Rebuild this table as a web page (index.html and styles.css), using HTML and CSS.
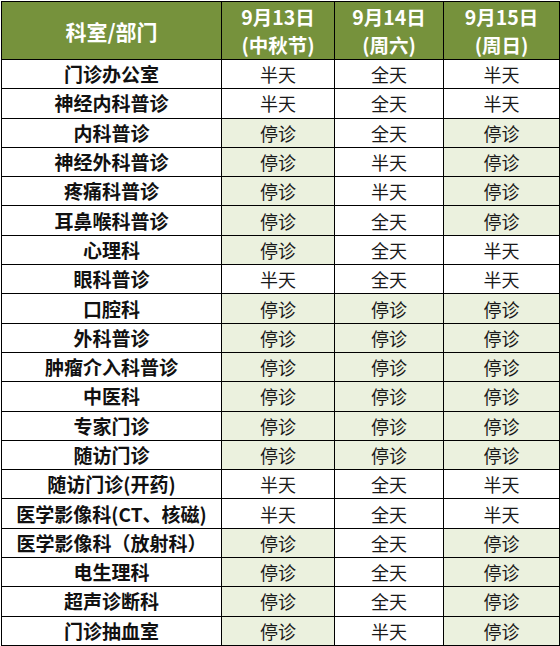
FILE: index.html
```html
<!DOCTYPE html>
<html lang="zh-CN">
<head>
<meta charset="utf-8">
<title>门诊安排</title>
<link rel="stylesheet" href="styles.css">
</head>
<body>
<div class="wrap">
<table class="sched">
<colgroup><col class="c1"><col class="c2"><col class="c3"><col class="c4"></colgroup>
<thead>
<tr class="head"><th class="lead">科室/部门</th><th>9月13日<br>(中秋节)</th><th>9月14日<br>(周六)</th><th>9月15日<br>(周日)</th></tr>
</thead>
<tbody>
<tr><td class="dept">门诊办公室</td><td>半天</td><td>全天</td><td>半天</td></tr>
<tr><td class="dept">神经内科普诊</td><td>半天</td><td>全天</td><td>半天</td></tr>
<tr><td class="dept">内科普诊</td><td class="off">停诊</td><td>全天</td><td class="off">停诊</td></tr>
<tr><td class="dept">神经外科普诊</td><td class="off">停诊</td><td>半天</td><td class="off">停诊</td></tr>
<tr><td class="dept">疼痛科普诊</td><td class="off">停诊</td><td>半天</td><td class="off">停诊</td></tr>
<tr><td class="dept">耳鼻喉科普诊</td><td class="off">停诊</td><td>全天</td><td class="off">停诊</td></tr>
<tr><td class="dept">心理科</td><td class="off">停诊</td><td>全天</td><td>半天</td></tr>
<tr><td class="dept">眼科普诊</td><td>半天</td><td>全天</td><td>半天</td></tr>
<tr><td class="dept">口腔科</td><td class="off">停诊</td><td class="off">停诊</td><td class="off">停诊</td></tr>
<tr><td class="dept">外科普诊</td><td class="off">停诊</td><td class="off">停诊</td><td class="off">停诊</td></tr>
<tr><td class="dept">肿瘤介入科普诊</td><td class="off">停诊</td><td class="off">停诊</td><td class="off">停诊</td></tr>
<tr><td class="dept">中医科</td><td class="off">停诊</td><td class="off">停诊</td><td class="off">停诊</td></tr>
<tr><td class="dept">专家门诊</td><td class="off">停诊</td><td class="off">停诊</td><td class="off">停诊</td></tr>
<tr><td class="dept">随访门诊</td><td class="off">停诊</td><td class="off">停诊</td><td class="off">停诊</td></tr>
<tr><td class="dept">随访门诊(开药)</td><td>半天</td><td>全天</td><td>半天</td></tr>
<tr><td class="dept">医学影像科(CT、核磁)</td><td>半天</td><td>全天</td><td>半天</td></tr>
<tr><td class="dept">医学影像科（放射科）</td><td class="off">停诊</td><td>全天</td><td class="off">停诊</td></tr>
<tr><td class="dept">电生理科</td><td class="off">停诊</td><td>全天</td><td class="off">停诊</td></tr>
<tr><td class="dept">超声诊断科</td><td class="off">停诊</td><td>全天</td><td class="off">停诊</td></tr>
<tr><td class="dept">门诊抽血室</td><td class="off">停诊</td><td>半天</td><td class="off">停诊</td></tr>
</tbody>
</table>
</div>
</body>
</html>
```
FILE: styles.css
```css
html, body {
  margin: 0;
  padding: 0;
  background: #ffffff;
}
.wrap {
  padding: 1px 0 0 1px;
}
.sched {
  border-collapse: collapse;
  table-layout: fixed;
  width: 558px;
  font-family: "Noto Sans CJK SC", "Noto Sans", sans-serif;
  color: #1a1a1a;
}
.c1 { width: 220px; }
.c2 { width: 113px; }
.c3 { width: 109px; }
.c4 { width: 116px; }
.sched th, .sched td {
  border: 1px solid #000;
  padding: 0;
  text-align: center;
  vertical-align: middle;
}
.head {
  height: 58px;
}
.head th {
  background: #76923c;
  color: #ffffff;
  font-weight: 700;
  font-size: 19.5px;
  line-height: 28px;
}
.head th.lead {
  font-size: 21px;
}
.sched tbody tr {
  height: 29.3px;
}
.sched td {
  font-size: 18px;
  line-height: 22px;
  font-weight: 400;
}
.sched td.dept {
  font-size: 19px;
  font-weight: 700;
  color: #111;
}
.sched td.off {
  background: #ebf1de;
}
```
